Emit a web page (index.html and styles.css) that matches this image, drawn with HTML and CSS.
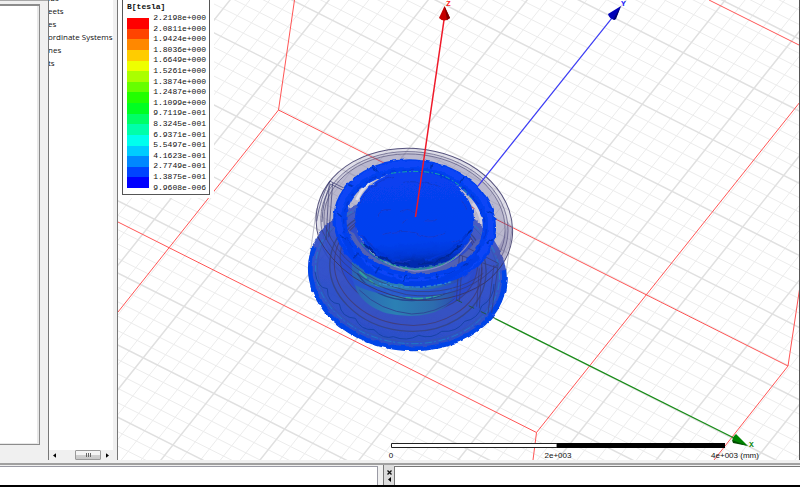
FILE: index.html
```
<!DOCTYPE html>
<html lang="en">
<head>
<meta charset="utf-8">
<title>Field plot</title>
<link rel="stylesheet" href="styles.css">
</head>
<body>
<div class="workspace">
  <aside class="props"><div class="props-box"></div></aside>
  <nav class="tree">
    <ul class="tree-list">
      <li>ids</li><li>eets</li><li>es</li><li>ordinate Systems</li><li>nes</li><li>ts</li>
    </ul>
    <div class="scrollbar">
      <button class="arrow" aria-label="Scroll left"><svg viewBox="0 0 4 6"><path d="M4 0V6L0 3Z"/></svg></button>
      <span class="thumb"><i></i><i></i><i></i></span>
      <button class="arrow" aria-label="Scroll right"><svg viewBox="0 0 4 6"><path d="M0 0V6L4 3Z"/></svg></button>
    </div>
  </nav>
  <main class="view">
    <svg class="scene" viewBox="118 0 681 460" preserveAspectRatio="xMinYMin slice">
      <defs>
        <filter id="rough" x="-5%" y="-5%" width="110%" height="110%">
          <feTurbulence type="fractalNoise" baseFrequency="0.05" numOctaves="2" seed="4"/>
          <feDisplacementMap in="SourceGraphic" scale="12" xChannelSelector="R" yChannelSelector="G"/>
        </filter>
        <linearGradient id="cap" x1="0" y1="0" x2="0.2" y2="1">
          <stop offset="0" stop-color="#0840f0"/><stop offset="0.8" stop-color="#0440ee"/><stop offset="0.93" stop-color="#0638d8"/><stop offset="1" stop-color="#062cb0"/>
        </linearGradient>
        <linearGradient id="core" x1="0" y1="0" x2="1" y2="0">
          <stop offset="0" stop-color="#2a64b4"/><stop offset="0.4" stop-color="#2b80b4"/><stop offset="0.75" stop-color="#2d6cae"/><stop offset="1" stop-color="#2b48b4"/>
        </linearGradient>
        <linearGradient id="base" x1="0" y1="0" x2="0" y2="1">
          <stop offset="0" stop-color="#4a5cc0"/><stop offset="0.5" stop-color="#2848c8"/><stop offset="1" stop-color="#1e44c4"/>
        </linearGradient>
      </defs>
      <g id="grid"></g>
      <g class="bounds">
        <path d="M294.500 0L278.500 110L118 312M278.500 110L788 366L800 286M788 366L714 460M118 222L536.500 432.500L533 460M536.500 432.500L800 102M709 0L800 45.500"/>
      </g>
      <g transform="translate(290 130) scale(.33333)" fill="none">
        <!-- upper translucent housing -->
        <path d="M80 235L60 375M667 290L648 430" stroke="#c0c0cc" stroke-width="3"/>
        <g transform="rotate(8 373 286)" stroke="#57547e" stroke-width="3">
          <ellipse cx="373" cy="286" rx="296" ry="230" fill="#403b78" fill-opacity=".16"/>
          <ellipse cx="373" cy="284" rx="282" ry="218" fill="#403b78" fill-opacity=".13" stroke-width="2"/>
          <ellipse cx="373" cy="282" rx="273" ry="209" fill="#403b78" fill-opacity=".12" stroke-width="2"/>
        </g>
        <!-- lower flange -->
        <g filter="url(#rough)">
          <g transform="rotate(7 352 430)">
            <ellipse cx="352" cy="430" rx="298" ry="231" fill="url(#base)" fill-opacity=".94"/>
            <path d="M66 385A292 225 0 1 0 638 385" stroke="#0644e8" stroke-width="14"/>
          </g>
        </g>
        <g transform="rotate(7 352 430)">
          <ellipse cx="352" cy="425" rx="277" ry="215" stroke="#188bc4" stroke-width="2" stroke-dasharray="22 8 6 5"/>
          <ellipse cx="352" cy="425" rx="271" ry="209" stroke="#3058a8" stroke-width="2"/>
          <ellipse cx="352" cy="415" rx="235" ry="188" fill="#4052b8" fill-opacity=".4" stroke="#34458e" stroke-width="4"/>
          <ellipse cx="352" cy="409" rx="222" ry="176" stroke="#403f80" stroke-width="3"/>
          <ellipse cx="352" cy="392" rx="207" ry="155" fill="#2447d2" fill-opacity=".65" stroke="#39418c" stroke-width="3"/>
        </g>
        <path d="M75 425Q82 475 112 476Q112 520 148 522Q154 563 196 565Q212 602 252 599Q280 630 310 620Q350 636 386 616Q425 629 455 604Q500 608 524 574Q565 567 575 528Q612 506 612 462" stroke="#1742a6" stroke-width="3"/>
        <!-- core seen through the ring -->
        <path d="M190 375Q176 430 202 486Q228 530 290 550Q390 572 462 534Q510 500 512 400Z" fill="url(#core)"/>
        <path d="M202 430Q250 508 365 512Q470 510 512 452" stroke="#25458f" stroke-width="4"/>
        <path d="M208 424Q282 498 380 506Q450 503 490 474" stroke="#33a59b" stroke-width="5" stroke-dasharray="30 9 16 6"/>
        <path d="M208 480Q270 543 365 552Q440 551 494 506" stroke="#2e4896" stroke-width="3"/>
        <path d="M174 300Q210 430 374 447Q540 440 590 320L560 330Q500 415 374 423Q240 410 192 310Z" fill="#5261b4"/>
        <path d="M180 440Q250 478 374 480Q490 478 550 425L528 462Q470 503 374 502Q265 500 195 465Z" fill="#2850d4" fill-opacity=".8"/>
        <!-- housing edges over the flange -->
        <g stroke="#37386f" stroke-width="3">
          <path d="M83 320Q160 466 350 507Q480 526 585 458Q620 432 640 398"/>
          <path d="M96 300Q160 452 350 494Q480 512 580 442L624 404" stroke-width="2"/>
          <path d="M107 290Q160 434 350 482Q490 498 580 430" stroke-width="2"/>
          <path d="M118 154L108 330M128 158L116 322M119 153L190 188M122 162L184 194M80 274Q91 202 119 154M96 276Q98 210 122 162" stroke-width="2"/>
          <path d="M510 350L499 513M518 378L508 516M535 355L625 400L605 548M500 372L622 414M568 415L560 530M575 412L568 535M612 405L594 550" stroke-width="2"/>
        </g>
        <path d="M667 290Q665 350 635 406L612 370Q645 330 652 275Z" fill="#59528d" fill-opacity=".3"/>
        <path d="M203 300Q240 405 375 423Q486 419 544 330" stroke="#7f88c4" stroke-width="4"/>
        <path d="M200 210Q225 151 288 130" stroke="#e0e0ee" stroke-width="9"/>
        <path d="M548 220Q574 249 576 282" stroke="#d2cfdf" stroke-width="10"/>
        <!-- ring -->
        <g filter="url(#rough)">
          <g transform="rotate(7 374 278)">
            <ellipse cx="374" cy="279" rx="225" ry="170" stroke="#053fee" stroke-width="40"/>
            <ellipse cx="374" cy="276" rx="230" ry="173" stroke="#0744f6" stroke-width="20"/>
            <ellipse cx="374" cy="283" rx="213" ry="161" stroke="#0538d8" stroke-width="4" stroke-dasharray="18 19 34 17 10 15"/>
            <path d="M170 350Q230 458 370 462Q500 458 574 355" stroke="#063ce8" stroke-width="14"/>
          </g>
          <path d="M142 250L155 260M148 315L170 331M190 385L206 369M256 430L268 410M340 455L350 434M440 450L443 431M520 407L535 398M590 339L605 329M592 246L607 252M522 143L513 158M425 100L422 116M250 111L265 127M178 164L190 170" stroke="#0530b8" stroke-width="4"/>
        </g>
        <g filter="url(#rough)">
          <ellipse cx="374" cy="268" rx="179" ry="145" fill="url(#cap)" transform="rotate(5 374 268)"/>
          <path d="M210 220Q235 155 315 139M240 174L262 163M340 157Q380 150 450 169M265 260Q260 236 304 239M330 245Q352 232 375 246M400 272Q438 276 444 264M275 314Q350 292 400 318Q430 328 466 306M215 315Q225 333 248 345M250 380Q310 405 361 394M484 336L508 327M515 209L532 240M353 270L336 280" stroke="#1238cc" stroke-width="3"/>
          <path d="M221 342L240 356L258 376L285 384L306 397L340 401L360 407M384 403L410 400L435 397L457 385L475 379L494 360L516 344M528 315L545 300" stroke="#052899" stroke-width="5"/>
          <path d="M218 320Q264 382 330 389M404 389Q480 377 532 310" stroke="#0536d6" stroke-width="6"/>
        </g>
        <path d="M213 338Q265 407 373 419Q460 416 510 370" stroke="#24a283" stroke-width="3" stroke-dasharray="18 8 5 6"/>
        <path d="M303 130Q420 113 478 146Q522 171 545 207" stroke="#18a6a2" stroke-width="3" stroke-dasharray="15 7 5 6"/>
        <path d="M267 460Q374 485 482 456" stroke="#3188d2" stroke-width="4" stroke-dasharray="6 5 14 8"/>
        <path d="M500 510L615 565" stroke="#225345" stroke-width="3" stroke-dasharray="18 22"/>
      </g>
      <path class="axis-z" d="M415.500 217L444 20"/>
      <path class="axis-y" d="M478 186L612 18"/>
      <path class="axis-x" d="M495 318.500L735 438.500"/>
      <path d="M444.500 6L439 18Q444 23 450 18Z" fill="#c60000"/><path d="M444.500 6L447 20L450 18Z" fill="#7e0000"/>
      <path d="M621 6L608 14Q609 19 615 20Z" fill="#0000b8"/><path d="M621 6L613 20L616 19Z" fill="#00006c"/>
      <path d="M748 446L736 434Q731 438 733 442Z" fill="#008400"/><path d="M748 446L732 440L733 443Z" fill="#004c00"/>
      <text x="446" y="6" class="label" fill="#f22">Z</text>
      <text x="621" y="6" class="label" fill="#22f">Y</text>
      <text x="749" y="447" class="label" fill="#118811">X</text>
      <path d="M391.500 443.500H557V447.500H391.500Z" fill="#fff" stroke="#222"/>
      <path d="M557 443H725V448H557Z"/>
      <g class="ticks">
        <text x="391" y="458">0</text><text x="558" y="458">2e+003</text><text x="735" y="458">4e+003 (mm)</text>
      </g>
    </svg>
    <section class="legend-area">
      <div class="legend">
        <h2>B[tesla]</h2>
        <div class="legend-body">
          <div class="bands" id="bands"></div>
          <ol class="values">
            <li>2.2198e+000</li><li>2.0811e+000</li><li>1.9424e+000</li><li>1.8036e+000</li><li>1.6649e+000</li><li>1.5261e+000</li><li>1.3874e+000</li><li>1.2487e+000</li><li>1.1099e+000</li><li>9.7119e-001</li><li>8.3245e-001</li><li>6.9371e-001</li><li>5.5497e-001</li><li>4.1623e-001</li><li>2.7749e-001</li><li>1.3875e-001</li><li>9.9608e-006</li>
          </ol>
        </div>
      </div>
    </section>
  </main>
</div>
<footer class="dock">
  <div class="messages"></div>
  <div class="grip">
    <button aria-label="Close"><svg viewBox="0 0 5 5"><path d="M.5 .5L4.500 4.500M4.500 .5L.5 4.500" stroke="#111" stroke-width="1.300"/></svg></button>
    <button aria-label="Collapse"><svg viewBox="0 0 5 5"><path d="M4 0V5L1 2.500Z"/></svg></button>
  </div>
  <div class="progress"></div>
</footer>
<script src="scene.js"></script>
</body>
</html>
```
FILE: styles.css
```
* { box-sizing: border-box; }
body {
  margin: 0;
  height: 100vh;
  display: flex;
  flex-direction: column;
  background: #f0f0f0;
  border-bottom: 2px solid #000;
  font-family: "Liberation Sans", Arial, sans-serif;
  overflow: hidden;
}
button { padding: 0; border: 0; background: none; display: flex; }
.workspace {
  flex: 1;
  min-height: 0;
  display: flex;
  padding-bottom: 3px;
}
.props {
  width: 48px;
  padding: 3px 8px 15px 0;
  border-top: 1px solid #a8a8a8;
}
.props-box {
  height: 100%;
  background: #fff;
  border: solid #8c8c8c;
  border-width: 2px 1px 1px 0;
  box-shadow: inset -2px 0 #e8e8e8, inset 0 -1px #e8e8e8;
}
.tree {
  width: 70px;
  display: flex;
  flex-direction: column;
  justify-content: space-between;
  background: #fff;
  border-left: 1px solid #777;
  border-right: 1px solid #777;
  box-shadow: inset -4px 0 #f0f0f0;
  overflow: hidden;
}
.tree-list {
  margin: -9px 0 0 -1px;
  padding: 0;
  list-style: none;
  font: 8px/13px "Open Sans", sans-serif;
  color: #111;
  white-space: nowrap;
}
.scrollbar {
  height: 10px;
  margin-right: 4px;
  padding: 0 4px;
  display: flex;
  align-items: center;
  background: #f0f0f0;
}
.arrow svg { width: 3px; height: 5px; }
.thumb {
  width: 26px;
  height: 10px;
  margin: 0 5px 0 auto;
  display: flex;
  align-items: center;
  justify-content: center;
  gap: 1px;
  border: 1px solid #999;
  border-radius: 1px;
  background: linear-gradient(#f4f4f4 45%, #cfcfcf 50%, #c8c8c8);
}
.thumb i { width: 1px; height: 4px; background: #666; }
.view {
  flex: 1;
  min-width: 0;
  position: relative;
  background: #fff;
  border-right: 1px solid #555;
}
.scene { display: block; width: 100%; height: 100%; }
.minor { stroke: #ececec; stroke-width: 1; }
.major { stroke: #e0e0e0; stroke-width: 1.5; }
.bounds { fill: none; stroke: #ff5555; stroke-width: 1; }
.axis-z { stroke: #f01828; stroke-width: 1.5; }
.axis-y { stroke: #3030ff; stroke-width: 1.2; }
.axis-x { stroke: #168c16; stroke-width: 1.3; }
.label { font: bold 8px "Liberation Mono", monospace; }
.ticks { font-size: 8px; fill: #111; text-anchor: middle; }
.legend-area {
  position: absolute;
  top: 0;
  left: 0;
  padding: 0 4px 3px;
  background: #fff;
}
.legend {
  width: 88px;
  padding: 2px 3px 1px 4px;
  border: solid #555;
  border-width: 0 1px 1px;
  font-family: "Liberation Mono", monospace;
  color: #111;
}
.legend h2 { margin: 0; font-size: 8px; line-height: 10px; }
.legend-body { display: flex; justify-content: space-between; }
.bands {
  width: 22px;
  height: 170px;
  margin-top: 6px;
  display: flex;
  flex-direction: column;
}
.bands span { flex: 1; }
.values {
  height: 180px;
  margin: 0 0 1px;
  padding: 0;
  display: flex;
  flex-direction: column;
  list-style: none;
  font-size: 8px;
  line-height: 11px;
}
.values li { flex: 1; min-height: 0; }
.dock {
  height: 22px;
  display: flex;
  border-top: 2px solid #a0a0a0;
  background: #f0f0f0;
  padding-top: 1px;
}
.messages {
  flex: 378;
  background: #fff;
  border-top: 1px solid #9a9aa4;
  border-right: 1px solid #9a9aa4;
}
.grip {
  width: 11px;
  margin: -1px 0 0 5px;
  padding: 5px 0 3px;
  display: flex;
  flex-direction: column;
  align-items: center;
  justify-content: space-between;
  background: #dcdcdc;
  border-left: 1px solid #777;
}
.grip svg { width: 5px; height: 5px; }
.progress {
  flex: 406;
  background: #fff;
  border-top: 1px solid #777;
  border-left: 1px solid #777;
}
```
FILE: scene.js
```
// Ground grid: five minor cells to each major cell.
const NS = "http://www.w3.org/2000/svg";
const grid = document.getElementById("grid");
const origin = [683.3, 52.7];
const u = [70.7, 35.6];
const v = [-41, 51.5];

function addLines(kind, a, b, steps) {
  let d = "";
  for (const k of steps) {
    const x = origin[0] + a[0] * k / 5;
    const y = origin[1] + a[1] * k / 5;
    d += `M${x - b[0] * 20} ${y - b[1] * 20}L${x + b[0] * 20} ${y + b[1] * 20}`;
  }
  const path = document.createElementNS(NS, "path");
  path.setAttribute("class", kind);
  path.setAttribute("d", d);
  grid.append(path);
}

const all = Array.from({ length: 141 }, (_, i) => i - 70);
const minor = all.filter(k => k % 5 !== 0);
const major = all.filter(k => k % 5 === 0);
addLines("minor", u, v, minor);
addLines("minor", v, u, minor);
addLines("major", u, v, major);
addLines("major", v, u, major);

// Legend colours, from the highest field value to the lowest.
const colours = ["#ff0000", "#ff4400", "#ff8800", "#ffcc00", "#eeff00", "#aaff00", "#66ff00", "#22ff00",
  "#00ff22", "#00ff66", "#00ffaa", "#00ffee", "#00ccff", "#0088ff", "#0044ff", "#0000ff"];
for (const colour of colours) {
  const band = document.createElement("span");
  band.style.background = colour;
  document.getElementById("bands").append(band);
}
```
